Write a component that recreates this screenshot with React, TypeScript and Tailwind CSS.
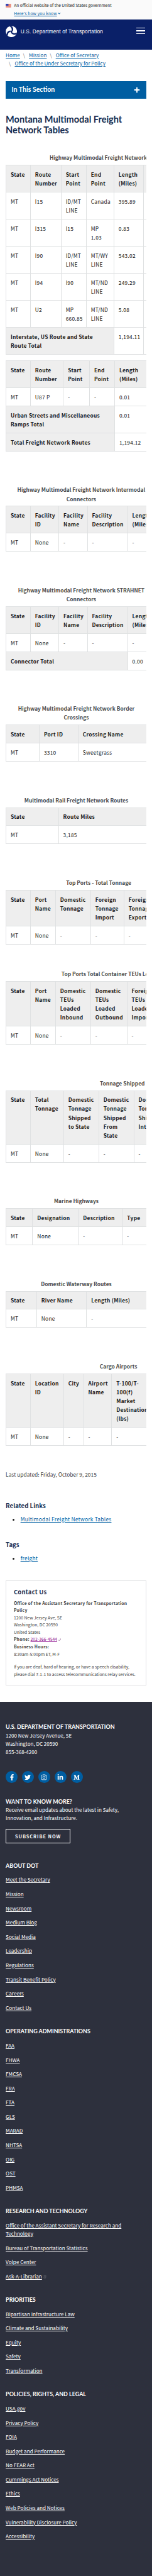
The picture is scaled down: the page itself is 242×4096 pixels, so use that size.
import React from "react";
import { FaFacebookF, FaTwitter, FaInstagram, FaLinkedinIn, FaMediumM, FaChevronDown, FaPlus } from "react-icons/fa";

type Total = { label: string; span: number; value: string };

type TableProps = {
  caption?: string;
  cols: number[];
  head: string[];
  rows?: string[][];
  totals?: Total[];
  className?: string;
};

const cell = "border border-[#dfe1e2] px-[11.65px] py-[11.65px] align-top text-left whitespace-pre";

function DataTable({ caption, cols, head, rows = [], totals = [], className = "" }: TableProps) {
  const width = cols.reduce((a, b) => a + b, 0);
  return (
    <div className={`overflow-hidden ${className}`}>
      <table className="table-fixed border-collapse leading-6 tracking-[0.4px]" style={{ width }}>
        {caption && (
          <caption className="pb-2 text-center font-bold tracking-normal whitespace-pre text-[#4a4a4a]">{caption}</caption>
        )}
        <colgroup>
          {cols.map((w, i) => (
            <col key={i} style={{ width: w }} />
          ))}
        </colgroup>
        <thead>
          <tr className="bg-[#eeeeee]">
            {head.map((h, i) => (
              <th key={i} className={`${cell} font-bold`}>{h}</th>
            ))}
          </tr>
        </thead>
        <tbody>
          {rows.map((r, i) => (
            <tr key={i}>
              {r.map((c, j) => (
                <td key={j} className={cell}>{c}</td>
              ))}
            </tr>
          ))}
          {totals.map((t) => (
            <tr key={t.label}>
              <th colSpan={t.span} className={`${cell} bg-[#eeeeee] font-bold`}>{t.label}</th>
              <td className={cell}>{t.value}</td>
              {cols.length > t.span + 1 && <td className={cell} />}
            </tr>
          ))}
        </tbody>
      </table>
    </div>
  );
}

function Flag() {
  return (
    <svg viewBox="0 0 16 11" className="mt-[11px] h-[10px] w-[15px] shrink-0">
      <rect width="16" height="11" fill="#fff" />
      {[0, 2, 4, 6, 8, 10].map((y) => (
        <rect key={y} y={y} width="16" height="1.1" fill="#db3e1f" />
      ))}
      <rect width="8" height="6.1" fill="#1e33b1" />
      {[1.2, 3, 4.8].map((y) => (
        <path key={y} d={`M1 ${y}h6.5`} stroke="#fff" strokeWidth=".5" strokeDasharray=".6 1" />
      ))}
    </svg>
  );
}

function Triskelion() {
  const arm = "M47 58 C49 48 53 42 53 33 C53 20 46 10 33 5 L45 -1 C60 7 68 20 66 34 C65 43 60 48 56 54Z";
  return (
    <svg viewBox="0 0 100 100" className="size-[31px]">
      <circle cx="50" cy="50" r="49" fill="#fff" />
      <g fill="#0a2068">
        <path d={arm} />
        <path d={arm} transform="rotate(120 50 50)" />
        <path d={arm} transform="rotate(240 50 50)" />
      </g>
    </svg>
  );
}

const link = "text-[#005ea2] underline";
const footerHeading = "font-['Lato',sans-serif] text-[15.2px] font-bold";

function Slash() {
  return <span className="pr-[10.5px] pl-[8.5px] text-[#71767a]">\</span>;
}

function FooterList({ title, items, className = "" }: { title: string; items: string[]; className?: string }) {
  return (
    <section className={className}>
      <h3 className={`${footerHeading} leading-[22.4px] uppercase`}>{title}</h3>
      <ul className="mt-4 flex flex-col gap-4 text-[13.8px]">
        {items.map((t) => (
          <li key={t} className="leading-[22.4px] whitespace-pre">
            <a className="underline">{t}</a>
            {t === "Ask-A-Librarian" && (
              <svg viewBox="0 0 10 10" className="ml-1 inline size-2 opacity-40" fill="none" stroke="#dfe1e2">
                <path d="M1 1h8M2 4h6v5H2zM9 1v3" />
              </svg>
            )}
          </li>
        ))}
      </ul>
    </section>
  );
}

const social = [FaFacebookF, FaTwitter, FaInstagram, FaLinkedinIn, FaMediumM];

const facilityHead = ["State", "Facility\nID", "Facility\nName", "Facility\nDescription", "Length\n(Miles)"];
const noneRow = ["MT", "None", "-", "-", "-"];

export default function App() {
  return (
    <div className="h-[4096px] w-[242px] overflow-hidden bg-white">
      <div className="flex h-[6959px] flex-col bg-white font-['Noto_Sans_CJK_SC',sans-serif] text-[14.3px] text-[#1b1b1b] [zoom:0.5886]">
        <div className="flex h-[52px] gap-2 bg-[#fafafa] pl-[15px] text-[11.16px]">
          <Flag />
          <div className="flex flex-col pt-1 leading-[22px] whitespace-nowrap">
            <span>An official website of the United States government</span>
            <span className="flex items-center gap-[3px] text-[#005ea2]">
              <a className="tracking-[0.3px] underline">Here's how you know</a>
              <FaChevronDown className="size-[8px]" />
            </span>
          </div>
        </div>

        <header className="flex h-[82px] items-start justify-between bg-[#0a2068] pr-[18px] pl-[15px]">
          <div className="mt-[18px] flex items-center gap-[9.5px]">
            <Triskelion />
            <span className="font-['Liberation_Sans',sans-serif] text-[14.2px] tracking-[0.22px] whitespace-nowrap text-white">
              U.S. Department of Transportation
            </span>
          </div>
          <div className="mt-[23px] flex w-6 flex-col gap-[5.3px]">
            <i className="h-[2px] bg-white" />
            <i className="h-[2px] bg-white" />
            <i className="h-[2px] bg-white" />
          </div>
        </header>

        <main className="px-[15.5px]">
          <nav className="h-[85.3px] pt-[3px] text-[13.7px] leading-[23px] whitespace-pre">
            <div>
              <a className={link}>Home</a>
              <Slash />
              <a className={link}>Mission</a>
              <Slash />
              <a className={link}>Office of Secretary</a>
            </div>
            <div>
              <Slash />
              <a className={link}>Office of the Under Secretary for Policy</a>
            </div>
          </nav>

          <div className="flex h-[47.5px] items-center justify-between bg-[#005ea2] px-4 font-['Lato',sans-serif] text-[18px] font-bold text-white">
            In This Section
            <FaPlus className="size-[17px]" />
          </div>

          <h1 className="mt-[40.3px] h-[106.5px] font-['Lato',sans-serif] text-[24.67px] leading-[29px] font-bold whitespace-pre text-[#162e51]">
            {"Montana Multimodal Freight\nNetwork Tables"}
          </h1>

          <DataTable
            caption="Highway Multimodal Freight Network"
            cols={[66, 83, 68, 75, 80, 127]}
            head={["State", "Route\nNumber", "Start\nPoint", "End\nPoint", "Length\n(Miles)", ""]}
            rows={[
              ["MT", "I15", "ID/MT\nLINE", "Canada", "395.89", ""],
              ["MT", "I315", "I15", "MP\n1.03", "0.83", ""],
              ["MT", "I90", "ID/MT\nLINE", "MT/WY\nLINE", "543.02", ""],
              ["MT", "I94", "I90", "MT/ND\nLINE", "249.29", ""],
              ["MT", "U2", "MP\n660.85", "MT/ND\nLINE", "5.08", ""],
            ]}
            totals={[{ label: "Interstate, US Route and State\nRoute Total", span: 4, value: "1,194.11" }]}
          />
          <DataTable
            className="mt-4"
            cols={[66, 89, 71, 68, 86]}
            head={["State", "Route\nNumber", "Start\nPoint", "End\nPoint", "Length\n(Miles)"]}
            rows={[["MT", "U87 P", "-", "-", "0.01"]]}
            totals={[
              { label: "Urban Streets and Miscellaneous\nRamps Total", span: 4, value: "0.01" },
              { label: "Total Freight Network Routes", span: 4, value: "1,194.12" },
            ]}
          />
          <DataTable
            className="mt-[91.4px]"
            caption={"Highway Multimodal Freight Network Intermodal\nConnectors"}
            cols={[66, 77, 77, 109, 78]}
            head={facilityHead}
            rows={[noneRow]}
          />
          <DataTable
            className="mt-[91.4px]"
            caption={"Highway Multimodal Freight Network STRAHNET\nConnectors"}
            cols={[66, 77, 77, 109, 78]}
            head={facilityHead}
            rows={[noneRow]}
            totals={[{ label: "Connector Total", span: 4, value: "0.00" }]}
          />
          <DataTable
            className="mt-[91.4px]"
            caption={"Highway Multimodal Freight Network Border\nCrossings"}
            cols={[90, 105, 185]}
            head={["State", "Port ID", "Crossing Name"]}
            rows={[["MT", "3310", "Sweetgrass"]]}
          />
          <DataTable
            className="mt-[91.4px]"
            caption="Multimodal Rail Freight Network Routes"
            cols={[142, 238]}
            head={["State", "Route Miles"]}
            rows={[["MT", "3,185"]]}
          />
          <DataTable
            className="mt-[91.4px]"
            caption="Top Ports - Total Tonnage"
            cols={[66, 68, 95, 90, 182]}
            head={["State", "Port\nName", "Domestic\nTonnage", "Foreign\nTonnage\nImport", "Foreign\nTonnage\nExport"]}
            rows={[noneRow]}
          />
          <DataTable
            className="mt-[67px]"
            caption="Top Ports Total Container TEUs Loaded"
            cols={[66, 68, 95, 98, 244]}
            head={["State", "Port\nName", "Domestic\nTEUs\nLoaded\nInbound", "Domestic\nTEUs\nLoaded\nOutbound", "Foreign\nTEUs\nLoaded\nImport"]}
            rows={[noneRow]}
          />
          <DataTable
            className="mt-[91.4px]"
            caption="Tonnage Shipped"
            cols={[66, 90, 95, 95, 283]}
            head={["State", "Total\nTonnage", "Domestic\nTonnage\nShipped\nto State", "Domestic\nTonnage\nShipped\nFrom\nState", "Domestic\nTonnage\nShipped\nIntrastate"]}
            rows={[noneRow]}
          />
          <DataTable
            className="mt-[91.4px]"
            caption="Marine Highways"
            cols={[72, 124, 119, 65]}
            head={["State", "Designation", "Description", "Type"]}
            rows={[["MT", "None", "-", "-"]]}
          />
          <DataTable
            className="mt-[91.4px]"
            caption="Domestic Waterway Routes"
            cols={[83, 135, 162]}
            head={["State", "River Name", "Length (Miles)"]}
            rows={[["MT", "None", "-"]]}
          />
          <DataTable
            className="mt-[91.4px]"
            caption="Cargo Airports"
            cols={[66, 90, 54, 76, 322]}
            head={["State", "Location\nID", "City", "Airport\nName", "T-100/T-\n100(f)\nMarket\nDestination\n(lbs)"]}
            rows={[noneRow]}
          />

          <p className="mt-16 leading-6 text-[#3d3d3d]">Last updated: Friday, October 9, 2015</p>

          <h2 className="mt-[61.6px] text-[16.4px] leading-6 font-bold text-[#162e51]">Related Links</h2>
          <ul className="mt-[11.5px] list-disc pl-10 leading-6 tracking-[0.4px]">
            <li><a className={link}>Multimodal Freight Network Tables</a></li>
          </ul>
          <h2 className="mt-[46px] text-[16.4px] leading-6 font-bold text-[#162e51]">Tags</h2>
          <ul className="mt-[12.5px] list-disc pl-10 leading-6 tracking-[0.4px]">
            <li><a className={link}>freight</a></li>
          </ul>

          <section className="mt-[47.7px] h-[285px] border border-[#dfe1e2] px-5 pt-[18px] text-[11.55px] leading-[19.65px] whitespace-nowrap text-[#3d3d3d]">
            <h2 className="mb-[9px] text-[16.1px] leading-6 font-bold tracking-[0.4px] text-[#162e51]">Contact Us</h2>
            <p className="font-bold tracking-[0.38px]">Office of the Assistant Secretary for Transportation<br />Policy</p>
            <p>1200 New Jersey Ave, SE</p>
            <p>Washington, DC 20590</p>
            <p>United States</p>
            <p className="flex items-center gap-[3px]">
              <b className="font-bold tracking-[0.38px]">Phone:</b>
              <a className="text-[#8b0a8b] underline">202-366-4544</a>
              <svg viewBox="0 0 8 8" className="size-[7px]" fill="none" stroke="#8b5a8b" strokeWidth="1.2">
                <path d="M1 6.5C4 7 7 5 6.8 1.5M.6 5l1.6 2M5.4 1.2l2 1" />
              </svg>
            </p>
            <p className="font-bold tracking-[0.38px]">Business Hours:</p>
            <p>8:30am-5:00pm ET, M-F</p>
            <p className="mt-[15.5px]">
              If you are deaf, hard of hearing, or have a speech disability,
              <br />
              please dial 7-1-1 to access telecommunications relay services.
            </p>
          </section>
        </main>

        <footer className="mt-[44.3px] flex-1 bg-[#2d303d] px-[15.5px] pt-[57px] text-[13.64px] text-white">
          <h3 className={`${footerHeading} leading-[22px]`}>U.S. DEPARTMENT OF TRANSPORTATION</h3>
          <p className="leading-[22.2px]">1200 New Jersey Avenue, SE<br />Washington, DC 20590<br />855-368-4200</p>
          <div className="mt-[40.8px] flex gap-3">
            {social.map((Icon, i) => (
              <span key={i} className="flex size-8 items-center justify-center rounded-full bg-[#005ea2]">
                <Icon className="size-[17px]" />
              </span>
            ))}
          </div>
          <h3 className={`mt-[40.7px] leading-[22px] ${footerHeading}`}>WANT TO KNOW MORE?</h3>
          <p className="leading-[22px] whitespace-nowrap">
            Receive email updates about the latest in Safety,
            <br />
            Innovation, and Infrastructure.
          </p>
          <a className="mt-[17.3px] flex h-10 w-[175px] items-center justify-center border border-white text-[12.5px] font-bold tracking-[1.6px]">
            SUBSCRIBE NOW
          </a>
          <FooterList
            className="mt-[48.2px]"
            title="About DOT"
            items={["Meet the Secretary", "Mission", "Newsroom", "Medium Blog", "Social Media", "Leadership", "Regulations", "Transit Benefit Policy", "Careers", "Contact Us"]}
          />
          <FooterList
            className="mt-[41.4px]"
            title="Operating Administrations"
            items={["FAA", "FHWA", "FMCSA", "FRA", "FTA", "GLS", "MARAD", "NHTSA", "OIG", "OST", "PHMSA"]}
          />
          <FooterList
            className="mt-[41px]"
            title="Research and Technology"
            items={["Office of the Assistant Secretary for Research and\nTechnology", "Bureau of Transportation Statistics", "Volpe Center", "Ask-A-Librarian"]}
          />
          <FooterList
            className="mt-[41px]"
            title="Priorities"
            items={["Bipartisan Infrastructure Law", "Climate and Sustainability", "Equity", "Safety", "Transformation"]}
          />
          <FooterList
            className="mt-[41px]"
            title="Policies, Rights, and Legal"
            items={["USA.gov", "Privacy Policy", "FOIA", "Budget and Performance", "No FEAR Act", "Cummings Act Notices", "Ethics", "Web Policies and Notices", "Vulnerability Disclosure Policy", "Accessibility"]}
          />
        </footer>
      </div>
    </div>
  );
}
